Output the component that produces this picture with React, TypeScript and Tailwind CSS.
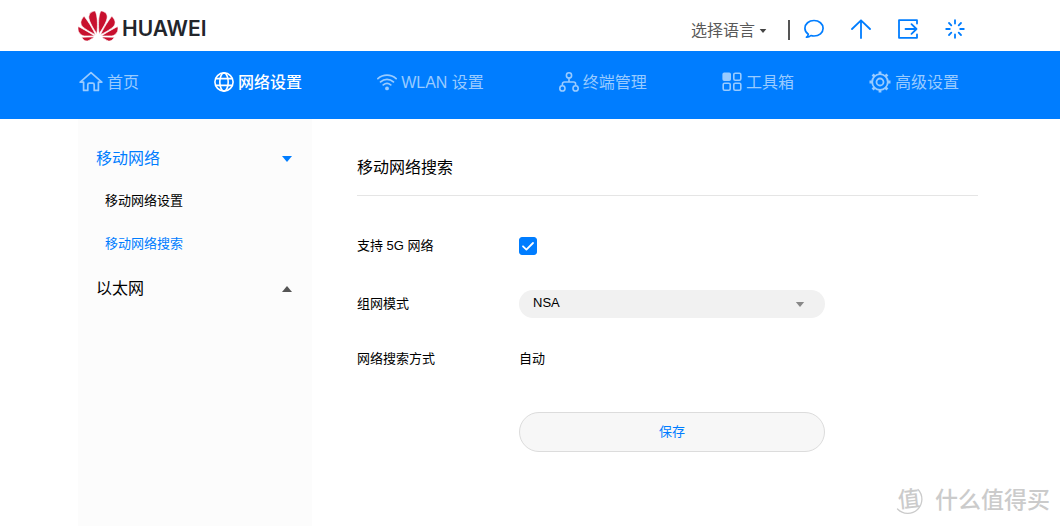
import { useState } from "react";
import type { ReactNode } from "react";
import { SiHuawei } from "react-icons/si";

function HomeIcon() {
  return (
    <svg className="h-6 w-6" viewBox="0 0 24 24" fill="none" stroke="currentColor" strokeWidth="1.7" strokeLinejoin="round" strokeLinecap="round" aria-hidden="true">
      <path d="M1.2 12.200 12 2.600l10.800 9.600H19.400V20.400H15.200V14.800a1.600 1.600 0 0 0-1.600-1.600h-3.200a1.600 1.600 0 0 0-1.600 1.600V20.400H4.600V12.200Z" />
    </svg>
  );
}

function GlobeIcon() {
  return (
    <svg className="h-5 w-5" viewBox="0 0 20 20" fill="none" stroke="currentColor" strokeWidth="1.6" aria-hidden="true">
      <circle cx="10" cy="10" r="9.1" />
      <ellipse cx="10" cy="10" rx="4.2" ry="9.1" />
      <path d="M1.800 6.600h16.400M1.800 13.400h16.400" />
    </svg>
  );
}

function WifiIcon() {
  return (
    <svg className="h-5 w-5" viewBox="0 0 20 20" fill="none" stroke="currentColor" strokeWidth="1.8" strokeLinecap="round" aria-hidden="true">
      <path d="M.9 6.6c5.2-4.6 13-4.6 18.2 0M3.6 9.8c3.7-3.300 9.100-3.300 12.800 0M6.300 12.900c2.200-1.800 5.200-1.800 7.400 0" />
      <circle cx="10" cy="16.4" r="1.9" fill="currentColor" stroke="none" />
    </svg>
  );
}

function DevicesIcon() {
  return (
    <svg className="h-5 w-5" viewBox="0 0 20 20" fill="none" stroke="currentColor" strokeWidth="1.6" aria-hidden="true">
      <circle cx="10" cy="3.4" r="2.6" />
      <circle cx="3.4" cy="16.4" r="2.6" />
      <circle cx="16.6" cy="16.4" r="2.6" />
      <path d="M10 6v4M3.4 13.8V12a2 2 0 0 1 2-2h9.2a2 2 0 0 1 2 2v1.8" />
    </svg>
  );
}

function ToolboxIcon() {
  return (
    <svg className="h-5 w-5" viewBox="0 0 20 20" fill="none" stroke="currentColor" strokeWidth="1.6" aria-hidden="true">
      <rect x="1.2" y="1.2" width="7" height="7" rx="1" fill="currentColor" />
      <rect x="11.8" y="1.2" width="7" height="7" rx="1.4" />
      <rect x="1.2" y="11.2" width="7" height="7" rx="1.4" />
      <rect x="11.8" y="11.2" width="7" height="7" rx="1.4" />
    </svg>
  );
}

function GearIcon() {
  return (
    <svg className="h-[22px] w-[22px]" viewBox="0 0 22 22" fill="none" stroke="currentColor" strokeWidth="1.8" aria-hidden="true">
      <circle cx="11" cy="11" r="7.8" />
      <circle cx="11" cy="11" r="3.5" />
      <path strokeWidth="2.8" d="M11 .5v2.8M11 18.7v2.8M.5 11h2.8M18.7 11h2.8M3.6 3.6l2 2M16.4 16.4l2 2M3.6 18.4l2-2M16.4 5.6l2-2" />
    </svg>
  );
}

function ChatIcon() {
  return (
    <svg className="h-5 w-5" viewBox="0 0 20 20" fill="none" stroke="currentColor" strokeWidth="1.7" strokeLinejoin="round" aria-hidden="true">
      <path d="M4.3 15.3C2.1 13.8.9 11.700.9 9.300.9 4.900 4.900 1.500 10 1.500S19.100 4.900 19.100 9.300 15.100 17 10 17C8.800 17 7.800 16.800 6.900 16.500 5.700 17.700 4.100 18.300 2.500 18.200 3.600 17.500 4.200 16.500 4.300 15.300Z" />
    </svg>
  );
}

function UpdateIcon() {
  return (
    <svg className="h-5 w-5" viewBox="0 0 20 20" fill="none" stroke="currentColor" strokeWidth="1.8" strokeLinecap="round" strokeLinejoin="round" aria-hidden="true">
      <path d="M10 19V1.500M1 10 10 1.300 19 10" />
    </svg>
  );
}

function LogoutIcon() {
  return (
    <svg className="h-5 w-5" viewBox="0 0 20 20" fill="none" stroke="currentColor" strokeWidth="1.8" strokeLinecap="round" strokeLinejoin="round" aria-hidden="true">
      <path d="M19 4.500V1.200H1V18.800H19V15.500M7.500 10H18.500M13.500 5.200 18.500 10 13.500 14.800" />
    </svg>
  );
}

function LoadingIcon() {
  return (
    <svg className="h-5 w-5" viewBox="0 0 20 20" fill="none" stroke="currentColor" strokeWidth="1.8" strokeLinecap="round" aria-hidden="true">
      <path d="M10 1.200V4.500M10 15.500V18.800M1.200 10H4.800M15.200 10H18.800M4 4 6.300 6.300M13.700 13.700 16 16M4 16 6.300 13.700M13.700 6.300 16 4" />
    </svg>
  );
}

function Triangle({ up = false, className = "" }: { up?: boolean; className?: string }) {
  return (
    <svg className={className} viewBox="0 0 10 6" fill="currentColor" aria-hidden="true">
      <path d={up ? "M0 6 5 0l5 6Z" : "M0 0h10L5 6Z"} />
    </svg>
  );
}

const navItems: { label: string; icon: ReactNode; active?: boolean }[] = [
  { label: "首页", icon: <HomeIcon /> },
  { label: "网络设置", icon: <GlobeIcon />, active: true },
  { label: "WLAN 设置", icon: <WifiIcon /> },
  { label: "终端管理", icon: <DevicesIcon /> },
  { label: "工具箱", icon: <ToolboxIcon /> },
  { label: "高级设置", icon: <GearIcon /> },
];

const actions = [
  { label: "反馈", icon: <ChatIcon /> },
  { label: "更新", icon: <UpdateIcon /> },
  { label: "退出", icon: <LogoutIcon /> },
  { label: "重启", icon: <LoadingIcon /> },
];

export default function App() {
  const [support5g, setSupport5g] = useState(true);

  return (
    <div className="relative flex min-h-screen flex-col bg-white font-['Liberation_Sans','Noto_Sans_CJK_SC',sans-serif] text-[13px] leading-5 text-black">
      <header className="px-[78px]">
        <div className="mx-auto flex h-[51px] max-w-[904px] items-center justify-between">
          <a href="#home" className="flex items-center gap-1">
            <SiHuawei className="h-10 w-10 stroke-white stroke-[0.4px] text-[#c8102e]" aria-hidden="true" />
            <span className="pt-1.5 font-['Inter',sans-serif] text-[21px] leading-7 font-semibold text-[#22252b]">HUAWEI</span>
          </a>
          <div className="flex items-center pt-2 pr-[17px]">
            <button type="button" className="flex items-center gap-1 pt-0.5 text-base text-[#595959]">
              选择语言
              <Triangle className="h-1 w-2 text-[#444]" />
            </button>
            <span className="ml-[21px] h-5 w-0.5 bg-[#555]" />
            <div className="ml-3.5 flex gap-[27px] pb-0.5 text-[#007dff]">
              {actions.map((a) => (
                <button key={a.label} type="button" aria-label={a.label}>
                  {a.icon}
                </button>
              ))}
            </div>
          </div>
        </div>
      </header>

      <nav className="bg-[#007dff] px-[78px]">
        <ul className="mx-auto flex h-[68px] max-w-[904px] items-center justify-between pr-[23px] pb-1.5 pl-px text-base">
          {navItems.map((item) => (
            <li key={item.label}>
              <a
                href="#nav"
                className={
                  item.active
                    ? "flex items-center gap-1 font-medium whitespace-nowrap text-white"
                    : "flex items-center gap-1 whitespace-nowrap text-[#99cbff]"
                }
              >
                {item.icon}
                <span className="pt-0.5">{item.label}</span>
              </a>
            </li>
          ))}
        </ul>
      </nav>

      <div className="flex grow px-[78px]">
        <div className="mx-auto flex max-w-[904px] grow">
          <aside className="w-[234px] shrink-0 bg-[#fcfcfc] px-[18px] pt-[30px]">
            <button type="button" className="flex w-full items-center justify-between pr-0.5 text-base leading-5 text-[#007dff]">
              移动网络
              <Triangle className="h-1.5 w-2.5" />
            </button>
            <ul className="mt-[22px] mb-[25px] flex flex-col gap-[23px] pl-[9px]">
              <li>
                <a href="#settings" className="block">移动网络设置</a>
              </li>
              <li>
                <a href="#search" className="block text-[#007dff]">移动网络搜索</a>
              </li>
            </ul>
            <button type="button" className="flex w-full items-center justify-between pr-0.5 text-base leading-5">
              以太网
              <Triangle up className="h-1.5 w-2.5 text-[#555]" />
            </button>
          </aside>

          <main className="ml-[45px] grow pt-[39px] pr-1">
            <h1 className="border-b border-[#e5e5e5] pb-[17px] text-base leading-5">移动网络搜索</h1>
            <form className="pt-10" onSubmit={(e) => e.preventDefault()}>
              <div className="flex items-center">
                <label htmlFor="support-5g" className="w-[162px]">支持 5G 网络</label>
                <span className="relative flex">
                  <input
                    id="support-5g"
                    type="checkbox"
                    checked={support5g}
                    onChange={(e) => setSupport5g(e.target.checked)}
                    className="h-[18px] w-[18px] appearance-none rounded-[3px] border border-[#007dff] checked:bg-[#007dff]"
                  />
                  {support5g && (
                    <svg className="pointer-events-none absolute inset-0 h-[18px] w-[18px]" viewBox="0 0 18 18" fill="none" stroke="white" strokeWidth="1.8" strokeLinecap="round" strokeLinejoin="round" aria-hidden="true">
                      <path d="M4 9.300 7.400 12.600 14 6" />
                    </svg>
                  )}
                </span>
              </div>
              <div className="mt-[34px] flex items-center">
                <label htmlFor="mode" className="w-[162px]">组网模式</label>
                <span className="relative flex w-[306px]">
                  <select id="mode" className="h-7 w-full appearance-none rounded-full bg-[#f1f1f1] px-3.5 pb-0.5 text-[13px] leading-5">
                    <option>NSA</option>
                    <option>SA+NSA</option>
                  </select>
                  <Triangle className="pointer-events-none absolute top-3 right-5 h-[5px] w-2.5 text-[#888]" />
                </span>
              </div>
              <div className="mt-[31px] flex items-center">
                <span className="w-[162px]">网络搜索方式</span>
                <span>自动</span>
              </div>
              <button type="submit" className="mt-[43px] ml-[162px] h-10 w-[306px] rounded-full border border-[#dcdcdc] bg-[#f7f7f7] text-[#007dff]">
                保存
              </button>
            </form>
          </main>
        </div>
      </div>

      <div className="pointer-events-none absolute right-2.5 bottom-2.5 flex items-center gap-2.5 text-[#cbcbcb]">
        <span className="relative flex h-8 w-8 items-center justify-center text-[22px] font-medium">
          <span className="-rotate-6">值</span>
          <svg className="absolute inset-0 h-8 w-8" viewBox="0 0 32 32" fill="none" stroke="currentColor" strokeWidth="1.3" strokeLinecap="round" aria-hidden="true">
            <path d="M25 5.500A14 14 0 1 1 4.500 25" />
          </svg>
        </span>
        <span className="text-[23px] leading-8 font-medium">什么值得买</span>
      </div>
    </div>
  );
}
